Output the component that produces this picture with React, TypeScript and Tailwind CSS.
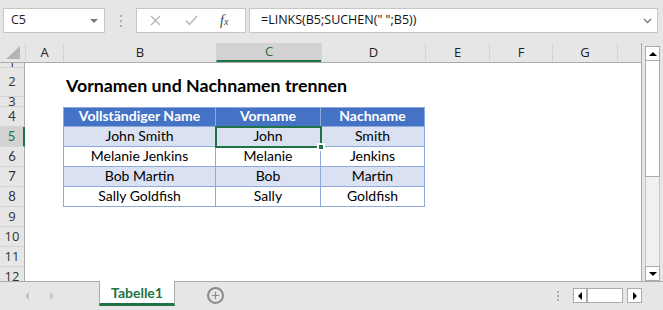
import { Plus } from "lucide-react";

const cols = [
  { k: "A", w: "w-[38px]" },
  { k: "B", w: "w-[153px]" },
  { k: "C", w: "w-[105px]" },
  { k: "D", w: "w-[104px]" },
  { k: "E", w: "w-[64px]" },
  { k: "F", w: "w-[63px]" },
  { k: "G", w: "w-[65px]" },
];

const people = [
  ["John Smith", "John", "Smith"],
  ["Melanie Jenkins", "Melanie", "Jenkins"],
  ["Bob Martin", "Bob", "Martin"],
  ["Sally Goldfish", "Sally", "Goldfish"],
];

function RowHead({ n, active, top }: { n: number; active?: boolean; top?: boolean }) {
  return (
    <div
      className={
        "w-[25px] shrink-0 flex justify-center overflow-hidden border-b border-[#d4d4d4] text-[13px] " +
        (top ? "items-end leading-[9px] " : "items-center ") +
        (active
          ? "bg-[#d2d2d2] text-[#217346] border-r-2 border-r-[#217346]"
          : "bg-[#e6e6e6] text-[#333] border-r border-r-[#ababab]")
      }
    >
      {n}
    </div>
  );
}

function Cell({ children, head, shade, first, w }: { children: React.ReactNode; head?: boolean; shade?: boolean; first?: boolean; w: string }) {
  return (
    <div
      className={
        w +
        " shrink-0 flex items-end justify-center pb-[1px] border-r border-b border-[#8eaadb] text-[14px] leading-[18px] " +
        (first ? "border-l " : "") +
        (head ? "bg-[#4472c4] text-white font-bold border-t" : shade ? "bg-[#d9e1f2] text-black" : "bg-white text-black")
      }
    >
      {children}
    </div>
  );
}

export default function App() {
  return (
    <div className="w-[663px] h-[310px] overflow-hidden bg-[#e6e6e6] flex flex-col font-['Open_Sans'] select-none">
      {/* formula bar */}
      <div className="h-[43px] shrink-0 flex items-start pt-[8px] pl-[3px]">
        <div className="w-[102px] h-[25px] bg-white border border-[#c6c6c6] flex items-center pl-[7px] pr-[6px] text-[12.5px] text-[#222]">
          <span className="flex-1">C5</span>
          <span className="w-0 h-0 border-l-[4px] border-r-[4px] border-t-[4px] border-l-transparent border-r-transparent border-t-[#777]" />
        </div>
        <div className="w-[31px] h-[25px] flex flex-col items-center justify-center gap-[3px]">
          <span className="w-[2px] h-[2px] bg-[#b0b0b0]" />
          <span className="w-[2px] h-[2px] bg-[#b0b0b0]" />
          <span className="w-[2px] h-[2px] bg-[#b0b0b0]" />
        </div>
        <div className="w-[110px] h-[25px] bg-white border border-[#c6c6c6] flex items-center pl-[13px]">
          <svg width="11" height="11" viewBox="0 0 11 11" className="mr-[24px]">
            <path d="M1 1 10 10M10 1 1 10" stroke="#b5b5b5" strokeWidth="1.3" />
          </svg>
          <svg width="13" height="11" viewBox="0 0 13 11" className="mr-[22px]">
            <path d="M1 5.5 4.5 9.5 12 1" stroke="#b5b5b5" strokeWidth="1.4" fill="none" />
          </svg>
          <span className="font-['Liberation_Serif'] italic text-[14px] text-[#444] leading-none">
            f<span className="text-[10px]">x</span>
          </span>
        </div>
        <div className="ml-[3px] w-[409px] h-[25px] bg-white border border-[#c6c6c6] flex items-center pl-[11px] pr-[5px] text-[12.5px] text-[#111]">
          <span className="flex-1">=LINKS(B5;SUCHEN(" ";B5))</span>
          <svg width="9" height="6" viewBox="0 0 9 6">
            <path d="M1 1 4.5 4.5 8 1" stroke="#777" strokeWidth="1.3" fill="none" />
          </svg>
        </div>
      </div>

      {/* sheet */}
      <div className="h-[238px] shrink-0 flex">
        <div className="w-[642px] flex flex-col border-r border-[#ababab]">
          {/* column headers */}
          <div className="h-[20px] shrink-0 flex border-b border-[#ababab] text-[13px] text-[#222]">
            <div className="w-[25px] shrink-0 flex items-end justify-end pr-[5px] pb-[3px]">
              <svg width="14" height="13" viewBox="0 0 14 13">
                <path d="M14 0V13H0Z" fill="#b4b4b4" />
              </svg>
            </div>
            {cols.map((c) => (
              <div
                key={c.k}
                className={
                  c.w +
                  " shrink-0 flex items-center justify-center border-l border-[#d4d4d4] " +
                  (c.k === "C" ? "bg-[#d2d2d2] text-[#217346] border-b-2 border-b-[#217346]" : "")
                }
              >
                {c.k}
              </div>
            ))}
            <div className="flex-1 border-l border-[#d4d4d4]" />
          </div>

          {/* rows */}
          <div className="flex-1 flex flex-col overflow-hidden bg-white">
            <div className="h-[5px] shrink-0 flex">
              <RowHead n={1} top />
            </div>
            <div className="h-[29px] shrink-0 flex">
              <RowHead n={2} />
              <div className="flex items-end pl-[41px] pb-[2px] font-['Lato'] font-bold text-[17.8px] text-black leading-none">
                Vornamen und Nachnamen trennen
              </div>
            </div>
            <div className="h-[10px] shrink-0 flex">
              <RowHead n={3} />
            </div>
            <div className="h-[20px] shrink-0 flex font-['Lato']">
              <RowHead n={4} />
              <div className="w-[38px] shrink-0" />
              <Cell head first w="w-[153px]">Vollständiger Name</Cell>
              <Cell head w="w-[105px]">Vorname</Cell>
              <Cell head w="w-[104px]">Nachname</Cell>
            </div>
            {people.map((p, i) => (
              <div key={p[0]} className={"h-[20px] shrink-0 flex font-['Lato'] " + (i === 0 ? "relative z-10" : "")}>
                <RowHead n={5 + i} active={i === 0} />
                <div className="w-[38px] shrink-0" />
                <Cell first shade={i % 2 === 0} w="w-[153px]">{p[0]}</Cell>
                <div className="relative flex">
                  <Cell shade={i % 2 === 0} w="w-[105px]">{p[1]}</Cell>
                  {i === 0 && (
                    <div className="absolute -left-[1px] -top-[1px] w-[107px] h-[22px] border-2 border-[#217346]">
                      <span className="absolute -right-[5px] -bottom-[5px] w-[8px] h-[8px] bg-[#217346] border-2 border-white" />
                    </div>
                  )}
                </div>
                <Cell shade={i % 2 === 0} w="w-[104px]">{p[2]}</Cell>
              </div>
            ))}
            {[9, 10, 11, 12].map((n) => (
              <div key={n} className="h-[20px] shrink-0 flex">
                <RowHead n={n} />
              </div>
            ))}
          </div>
        </div>

        {/* vertical scrollbar */}
        <div className="flex-1 flex justify-center pt-[3px]">
          <div className="w-[15px] flex flex-col bg-[#f0f0f0] border-x border-[#c6c6c6]">
            <div className="h-[15px] shrink-0 bg-white border border-[#ababab] -mx-[1px] flex items-center justify-center">
              <span className="w-0 h-0 border-l-[4px] border-r-[4px] border-b-[4px] border-l-transparent border-r-transparent border-b-black" />
            </div>
            <div className="h-[116px] shrink-0 bg-white border border-t-0 border-[#ababab] -mx-[1px]" />
            <div className="flex-1" />
            <div className="h-[15px] shrink-0 bg-white border border-[#ababab] -mx-[1px] flex items-center justify-center">
              <span className="w-0 h-0 border-l-[4px] border-r-[4px] border-t-[4px] border-l-transparent border-r-transparent border-t-black" />
            </div>
          </div>
        </div>
      </div>

      {/* sheet tabs */}
      <div className="flex-1 flex items-start border-t border-[#ababab]">
        <div className="w-[99px] h-[27px] flex items-center pl-[25px] gap-[21px]">
          <span className="w-0 h-0 border-t-[4px] border-b-[4px] border-r-[4px] border-t-transparent border-b-transparent border-r-[#c4c4c4]" />
          <span className="w-0 h-0 border-t-[4px] border-b-[4px] border-l-[4px] border-t-transparent border-b-transparent border-l-[#c4c4c4]" />
        </div>
        <div className="w-[76px] h-[25px] -mt-[1px] bg-white border-x border-[#ababab] border-b-[3px] border-b-[#217346] flex items-center justify-center font-['Lato'] font-bold text-[14px] text-[#217346]">
          Tabelle1
        </div>
        <div className="w-[80px] h-[27px] flex items-center justify-center">
          <div className="w-[17px] h-[17px] rounded-full border-2 border-[#8a8a8a] flex items-center justify-center">
            <Plus size={11} strokeWidth={2.5} color="#8a8a8a" />
          </div>
        </div>
        <div className="flex-1 h-[27px] flex items-center justify-end pr-[21px]">
          <div className="flex flex-col gap-[2px] mr-[14px]">
            <span className="w-[2px] h-[2px] bg-[#b0b0b0]" />
            <span className="w-[2px] h-[2px] bg-[#b0b0b0]" />
            <span className="w-[2px] h-[2px] bg-[#b0b0b0]" />
          </div>
          <div className="h-[15px] flex border border-[#ababab] bg-white">
            <div className="w-[14px] flex items-center justify-center border-r-2 border-[#ababab]">
              <span className="w-0 h-0 border-t-[4px] border-b-[4px] border-r-[4px] border-t-transparent border-b-transparent border-r-black" />
            </div>
            <div className="w-[34px]" />
          </div>
          <div className="w-[15px] h-[15px] ml-[4px] border border-[#ababab] bg-white flex items-center justify-center">
            <span className="w-0 h-0 border-t-[4px] border-b-[4px] border-l-[4px] border-t-transparent border-b-transparent border-l-black" />
          </div>
        </div>
      </div>
    </div>
  );
}
